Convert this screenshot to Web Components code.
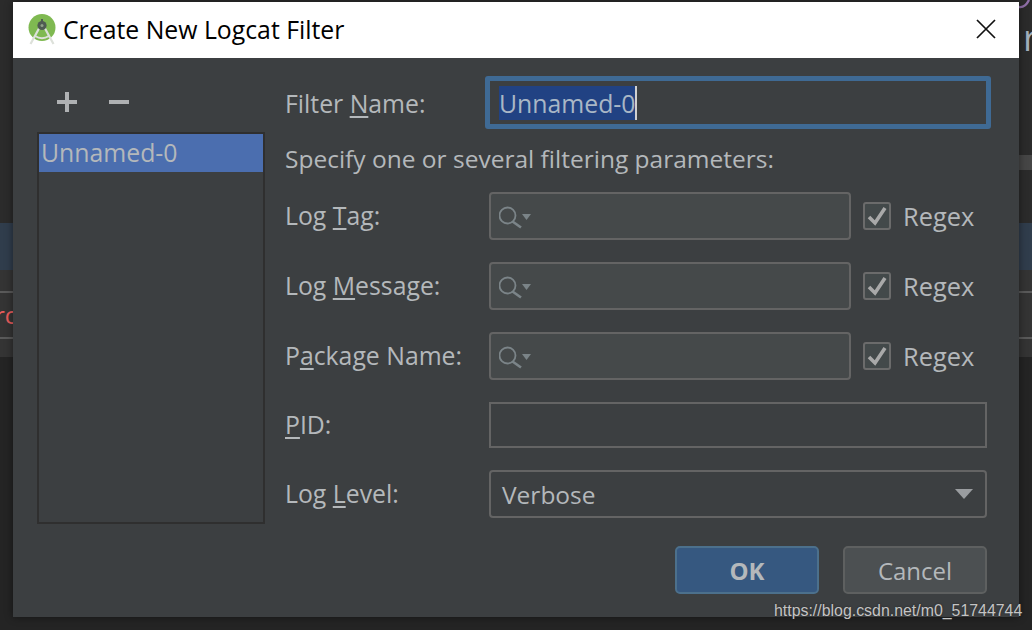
<!doctype html>
<html>
<head>
<meta charset="utf-8">
<title>Create New Logcat Filter</title>
<style>
html, body { margin: 0; height: 100%; background: #2b2b2b; overflow: hidden; }
body { font-family: "Open Sans", "Noto Sans", sans-serif; }
</style>
</head>
<body>
<ide-backdrop>
	<logcat-dialog heading="Create New Logcat Filter">
		<filter-list slot="side" selected="Unnamed-0"></filter-list>
		<form-row label="Filter |N|ame:" kind="name"><name-field value="Unnamed-0"></name-field></form-row>
		<p class="hint">Specify one or several filtering parameters:</p>
		<form-row label="Log |T|ag:"><search-field></search-field><regex-check></regex-check></form-row>
		<form-row label="Log |M|essage:"><search-field></search-field><regex-check></regex-check></form-row>
		<form-row label="P|a|ckage Name:"><search-field></search-field><regex-check></regex-check></form-row>
		<form-row label="|P|ID:" kind="pid"><plain-field></plain-field></form-row>
		<form-row label="Log |L|evel:"><combo-box value="Verbose"></combo-box></form-row>
		<dialog-button slot="buttons" primary>OK</dialog-button>
		<dialog-button slot="buttons">Cancel</dialog-button>
	</logcat-dialog>
</ide-backdrop>

<script>
function define(name, styles, markup) {
	customElements.define(name, class extends HTMLElement {
		constructor() {
			super();
			this.attachShadow({ mode: "open" });
			let html = typeof markup === "function" ? markup(this) : markup;
			this.shadowRoot.innerHTML = `<style>${styles}</style>${html}`;
		}
	});
}

// the blurred IDE behind the dialog only shows in a thin strip around it
define("ide-backdrop", `
:host {
	display: block;
	position: relative;
	width: 1032px;
	height: 630px;
	box-sizing: border-box;
	padding: 2px 13px 13px;
	background: #2b2b2b;
	overflow: hidden;
}
.bit { position: absolute; left: 0; right: 0; }
#low { top: 357px; bottom: 0; background: #242424; }
#tab { left: 1019px; top: 155px; height: 15px; background: #464646; }
#band { top: 223px; height: 47px; background: #303d4c; }
#rows { top: 270px; height: 87px; background: #343434; }
#line1 { top: 291px; height: 2px; background: #5a5a5a; }
#line2 { top: 337px; height: 2px; background: #5a5a5a; }
#rc { right: auto; left: -5px; top: 300px; color: #e85c5c; font-size: 24px; line-height: 30px; }
#r { right: auto; left: 1023px; top: 18px; color: #a3afbc; font-size: 36px; line-height: 40px; }
#arc { left: 1019px; top: 0; }
#mark {
	left: 774px;
	top: 601px;
	right: auto;
	color: #c4c4c4;
	font: 15.9px/20px "Liberation Sans", sans-serif;
	text-shadow: 0 0 2px #222;
	white-space: nowrap;
}
slot { display: block; position: relative; }
`, `
<div class="bit" id="low"></div>
<div class="bit" id="tab"></div>
<div class="bit" id="band"></div>
<div class="bit" id="rows"></div>
<div class="bit" id="line1"></div>
<div class="bit" id="line2"></div>
<div class="bit" id="rc">rc</div>
<div class="bit" id="r">r</div>
<svg class="bit" id="arc" width="13" height="10" viewBox="0 0 13 10"><path d="M0 7 Q6 8 10 0" fill="none" stroke="#8f6fa8" stroke-width="2.4"/></svg>
<slot></slot>
<div class="bit" id="mark">https://blog.csdn.net/m0_51744744</div>
`);

define("logcat-dialog", `
:host {
	display: flex;
	flex-direction: column;
	width: 1006px;
	height: 615px;
	background: #3c3f41;
	color: #b4b8bb;
	box-shadow: 0 0 8px rgba(0,0,0,.45);
	font-size: 24.8px;
}
header {
	display: flex;
	align-items: center;
	height: 56px;
	flex: none;
	box-sizing: border-box;
	padding: 0 23px 0 15px;
	gap: 7px;
	background: #fff;
	color: #000;
}
header svg { flex: none; margin-top: -2px; overflow: visible; }
h1 { flex: 1; margin: -3px 0 0; font: inherit; }
main {
	flex: 1;
	display: flex;
	padding: 18px 32px 23px 24px;
	gap: 21px;
	min-height: 0;
}
.form { flex: 1; display: flex; flex-direction: column; min-width: 0; }
.body { flex: 1; display: flex; flex-direction: column; gap: 22px; }
.buttons { display: flex; justify-content: flex-end; gap: 24px; margin-top: 28px; }
::slotted(p.hint) {
	margin: -24px 0 -20px -1px;
	height: 63px;
	display: flex;
	align-items: center;
	font-size: 24.5px;
}
`, self => `
<header>
	<svg width="28" height="32" viewBox="0 0 28 32">
		<circle cx="14" cy="14.5" r="13.5" fill="#7fb951"/>
		<path d="M14 10 L2.5 31 M14 10 L25.5 31" stroke="#dde1da" stroke-width="2.2" fill="none"/>
		<path d="M7 23 Q14 27.5 21 23" stroke="#dde1da" stroke-width="1.8" fill="none"/>
		<rect x="13" y="6" width="2" height="3" fill="#4f5b52"/>
		<circle cx="14" cy="12.5" r="4.6" fill="#4f5b52"/>
		<circle cx="14" cy="12.5" r="1.5" fill="#8fa088"/>
	</svg>
	<h1>${self.getAttribute("heading")}</h1>
	<svg width="20" height="20" viewBox="0 0 20 20"><path d="M1 1 L19 19 M19 1 L1 19" stroke="#111" stroke-width="1.7"/></svg>
</header>
<main>
	<slot name="side"></slot>
	<div class="form">
		<div class="body"><slot></slot></div>
		<div class="buttons"><slot name="buttons"></slot></div>
	</div>
</main>
`);

define("filter-list", `
:host { display: flex; flex-direction: column; width: 228px; height: 448px; }
.tools { height: 56px; flex: none; position: relative; }
.tools svg { position: absolute; top: 16px; }
.list { flex: 1; border: 2px solid #2f2f2f; }
.row {
	background: #4b6eaf;
	height: 38px;
	line-height: 37px;
	padding-left: 2px;
}
`, self => `
<div class="tools">
	<svg style="left:20px" width="20" height="20" viewBox="0 0 20 20"><path d="M0 10H20M10 0V20" stroke="#afb1b3" stroke-width="4"/></svg>
	<svg style="left:72px" width="20" height="20" viewBox="0 0 20 20"><path d="M0 10H20" stroke="#afb1b3" stroke-width="4"/></svg>
</div>
<div class="list"><div class="row">${self.getAttribute("selected")}</div></div>
`);

define("form-row", `
:host { display: flex; align-items: center; height: 48px; gap: 12px; }
:host([kind="name"]) { height: 53px; }
:host([kind="pid"]) { height: 46px; }
.label { width: 192px; flex: none; margin-left: -1px; white-space: nowrap; margin-top: -3px; }
:host([kind="name"]) .label { margin-top: 0; }
:host([kind="pid"]) .label { margin-top: -2px; }
u { text-underline-offset: 3px; text-decoration-thickness: 2px; }
.fields { flex: 1; display: flex; align-items: center; height: 100%; gap: 12px; min-width: 0; }
`, self => {
	let [a, m, b] = self.getAttribute("label").split("|");
	return `<div class="label">${a}<u>${m}</u>${b}</div><div class="fields"><slot></slot></div>`;
});

define("name-field", `
:host {
	display: flex;
	align-items: center;
	flex: 1;
	height: 53px;
	margin: 0 -4px 0 -4px;
	box-sizing: border-box;
	border: 5px solid #3f6a94;
	border-radius: 3px;
	padding-left: 9px;
	color: #a9b7c6;
}
.sel { background: #214283; line-height: 34px; height: 34px; }
.caret { width: 2px; height: 34px; background: #d0d0d0; }
`, self => `<span class="sel">${self.getAttribute("value")}</span><span class="caret"></span>`);

define("search-field", `
:host {
	display: flex;
	align-items: center;
	width: 362px;
	height: 48px;
	box-sizing: border-box;
	flex: none;
	background: #45494a;
	border: 2px solid #646464;
	border-radius: 4px;
	padding-left: 8px;
}
`, `
<svg width="34" height="30" viewBox="0 0 34 30">
	<circle cx="8.5" cy="14.5" r="8" fill="none" stroke="#7b8488" stroke-width="1.8"/>
	<path d="M13.5 20.5 L22 26.5" stroke="#7b8488" stroke-width="2.6"/>
	<path d="M23 13 H32 L27.5 19 Z" fill="#7b8488"/>
</svg>
`);

define("regex-check", `
:host { display: flex; align-items: center; gap: 12px; font-size: 25.4px; }
.box {
	width: 28px;
	height: 28px;
	box-sizing: border-box;
	background: #43494a;
	border: 2px solid #6b6b6b;
	border-radius: 3px;
	display: flex;
	align-items: center;
	justify-content: center;
}
`, `
<div class="box"><svg width="20" height="20" viewBox="0 0 20 20"><path d="M2 11 L8 17 L18 2" fill="none" stroke="#a9a9a9" stroke-width="3.6"/></svg></div>
<span>Regex</span>
`);

define("plain-field", `
:host {
	display: block;
	flex: 1;
	height: 46px;
	box-sizing: border-box;
	border: 2px solid #646464;
}
`, ``);

define("combo-box", `
:host {
	display: flex;
	align-items: center;
	justify-content: space-between;
	flex: 1;
	height: 48px;
	box-sizing: border-box;
	border: 2px solid #646464;
	border-radius: 4px;
	padding: 0 12px 0 11px;
	font-size: 24.5px;
}
`, self => `
<span>${self.getAttribute("value")}</span>
<svg width="18" height="10" viewBox="0 0 18 10"><path d="M0 0 H18 L9 10 Z" fill="#9a9da0"/></svg>
`);

define("dialog-button", `
:host {
	display: flex;
	align-items: center;
	justify-content: center;
	width: 144px;
	height: 48px;
	box-sizing: border-box;
	background: #4c5052;
	border: 2px solid #5e6060;
	border-radius: 5px;
	font-size: 24px;
}
:host([primary]) {
	background: #365880;
	border-color: #4c708c;
	font-weight: 700;
}
`, `<slot></slot>`);
</script>
</body>
</html>
